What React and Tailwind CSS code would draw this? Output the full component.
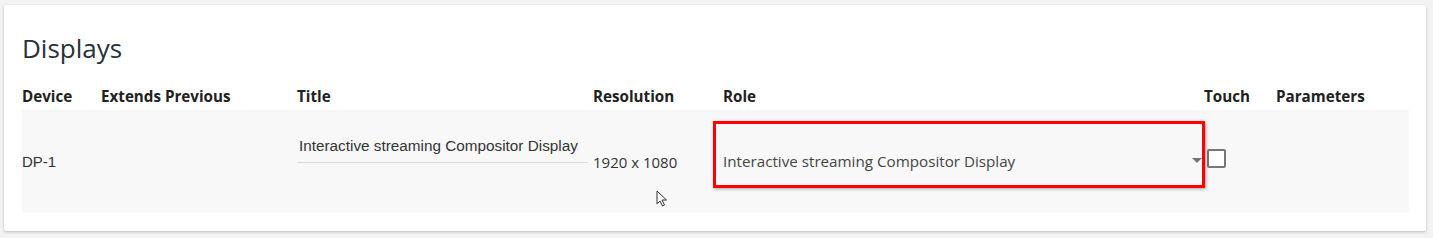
import React from "react";

const open = { fontFamily: '"Open Sans", "Liberation Sans", sans-serif' };
const arial = { fontFamily: '"Liberation Sans", Arial, sans-serif' };

export default function App() {
  return (
    <div className="w-[1433px] h-[238px] bg-[#f3f3f3] pt-[5px] pl-[4px] overflow-hidden" style={open}>
      <div className="relative w-[1422px] h-[226px] bg-white shadow-[0_1px_3px_rgba(0,0,0,0.25)] rounded-[2px] pl-[18px] pt-[26px]">
        <h2 className="text-[26px] leading-[34px] text-[#263238] font-normal">Displays</h2>
        <div className="mt-[21px] grid grid-cols-[79px_196px_296px_130px_481px_72px_133px] text-[15.2px] leading-[20px] font-bold text-[#212121]">
          <div>Device</div>
          <div>Extends Previous</div>
          <div>Title</div>
          <div>Resolution</div>
          <div>Role</div>
          <div>Touch</div>
          <div>Parameters</div>
        </div>
        <div className="mt-[4px] h-[103px] w-[1387px] bg-[#f8f8f8] grid grid-cols-[79px_196px_296px_130px_481px_72px_133px] items-center">
          <div className="text-[15px] text-[#333] pt-[1px]" style={arial}>DP-1</div>
          <div></div>
          <div className="self-start pt-[26px] pr-[5px]">
            <div className="h-[27px] border-b border-[#dcdcdc] pl-[2px] text-[15.3px] leading-[20px] text-[#333] whitespace-nowrap" style={arial}>
              Interactive streaming Compositor Display
            </div>
          </div>
          <div className="text-[15px] text-[#333] pt-[1px]">1920 x 1080</div>
          <div className="relative h-full flex items-center">
            <div className="absolute left-[-10px] top-[11px] w-[492px] h-[67px] border-[3px] border-[#ff0000] shadow-[1px_1px_3px_rgba(0,0,0,0.35)]"></div>
            <span className="text-[15.2px] text-[#444] whitespace-nowrap">Interactive streaming Compositor Display</span>
            <svg className="absolute right-[2px] top-[48px]" width="10" height="6" viewBox="0 0 10 6">
              <path d="M0 0 L10 0 L5 5 Z" fill="#777" />
            </svg>
          </div>
          <div className="flex items-center pl-[3px] pb-[6px]">
            <div className="w-[19px] h-[19px] border-2 border-[#777] rounded-[2px] bg-white"></div>
          </div>
          <div></div>
        </div>
        <svg className="absolute left-[652px] top-[185px]" width="12" height="18" viewBox="0 0 12 18">
          <path d="M1 1 L1 14 L4 11 L6.5 16 L8.5 15 L6 10 L10.5 10 Z" fill="#fff" stroke="#333" strokeWidth="1" strokeLinejoin="round" />
        </svg>
      </div>
    </div>
  );
}
